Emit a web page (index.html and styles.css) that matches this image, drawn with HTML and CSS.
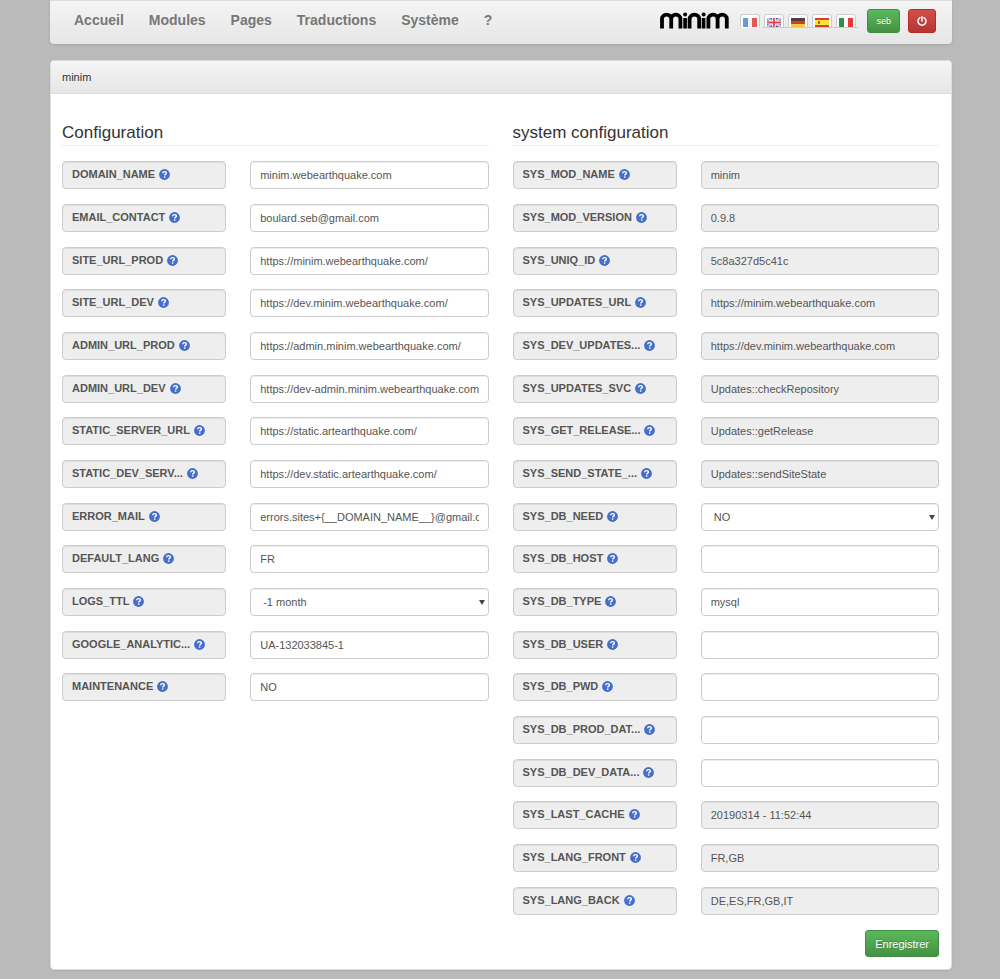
FILE: index.html
```html
<!DOCTYPE html>
<html lang="fr">
<head>
<meta charset="utf-8">
<meta name="viewport" content="width=device-width, initial-scale=1">
<title>minim</title>
<link rel="stylesheet" href="styles.css">
</head>
<body>
<svg class="sprite" aria-hidden="true">
  <symbol id="help" viewBox="0 0 22 22">
    <circle cx="11" cy="11" r="10.8" fill="#446ecb"/>
    <path d="M7.3 8.6C7.5 6.3 9 5.2 11.1 5.2c2.2 0 3.7 1.2 3.7 3 0 2.6-3.5 2.7-3.5 5" fill="none" stroke="#fff" stroke-width="2.8"/>
    <rect x="9.8" y="14.7" width="3" height="2.8" fill="#fff"/>
  </symbol>
</svg>
<div class="container">
  <header class="navbar">
    <nav class="menu">
      <a href="#">Accueil</a>
      <a href="#">Modules</a>
      <a href="#">Pages</a>
      <a href="#">Traductions</a>
      <a href="#">Système</a>
      <a href="#">?</a>
    </nav>
    <div class="tools">
      <a class="logo" href="#" aria-label="minim">
        <svg viewBox="0 0 70 17" fill="none" stroke="#000" stroke-width="3.8">
          <path d="M2 16.5V7a4.6 4.4 0 0 1 9.2 0v9.500M11.200 7a4.600 4.400 0 0 1 9.200 0v9.500"/>
          <path d="M25.100 6V16.500M43.600 6V16.500" stroke-width="3.6"/>
          <circle cx="25.100" cy="2.600" r="2" fill="#000" stroke="none"/>
          <path d="M29.600 16.500V7a4.800 4.400 0 0 1 9.600 0v9.500"/>
          <circle cx="43.600" cy="2.600" r="2" fill="#000" stroke="none"/>
          <path d="M48.400 16.500V7a4.600 4.400 0 0 1 9.200 0v9.500M57.600 7a4.600 4.400 0 0 1 9.200 0v9.500"/>
        </svg>
      </a>
      <div class="langs">
        <a class="lang active" href="#" aria-label="Français"><svg viewBox="0 0 14 9"><path fill="#6c99d6" d="M0 0h5v9H0z"/><path fill="#f3f0f2" d="M5 0h4v9H5z"/><path fill="#e4574f" d="M9 0h5v9H9z"/></svg></a>
        <a class="lang" href="#" aria-label="English"><svg viewBox="0 0 14 9"><path fill="#4165ac" d="M0 0h14v9H0z"/><path stroke="#fff" stroke-width="2" d="M0 0l14 9M14 0L0 9"/><path stroke="#dc6a73" stroke-width=".8" d="M0 0l14 9M14 0L0 9"/><path stroke="#fff" stroke-width="3.6" d="M7 0v9M0 4.5h14"/><path stroke="#df4550" stroke-width="1.8" d="M7 0v9M0 4.5h14"/></svg></a>
        <a class="lang" href="#" aria-label="Deutsch"><svg viewBox="0 0 14 9"><path fill="#4b4343" d="M0 0h14v3H0z"/><path fill="#d83a2e" d="M0 3h14v3H0z"/><path fill="#f2c73c" d="M0 6h14v3H0z"/></svg></a>
        <a class="lang" href="#" aria-label="Español"><svg viewBox="0 0 14 9"><path fill="#e23a31" d="M0 0h14v9H0z"/><path fill="#ffe23a" d="M0 2h14v5H0z"/><path fill="#c95c37" d="M3 3h2v3H3z"/></svg></a>
        <a class="lang" href="#" aria-label="Italiano"><svg viewBox="0 0 14 9"><path fill="#2f9148" d="M0 0h5v9H0z"/><path fill="#fff" d="M5 0h4v9H5z"/><path fill="#e43b37" d="M9 0h5v9H9z"/></svg></a>
      </div>
      <button class="btn green small" type="button">seb</button>
      <button class="btn red small" type="button" aria-label="Déconnexion"><svg viewBox="0 0 10 10" fill="none" stroke="#fff" stroke-width="1.5" stroke-linecap="round"><path d="M3 1.7a4 4 0 1 0 4 0M5 .8V5"/></svg></button>
    </div>
  </header>

  <main class="panel">
    <div class="panel-heading">minim</div>
    <form class="panel-body">
      <div class="columns">
        <section>
          <h2>Configuration</h2>
          <div class="rows">
            <div class="row"><label for="a1">DOMAIN_NAME <svg><use href="#help"/></svg></label><input id="a1" value="minim.webearthquake.com"></div>
            <div class="row"><label for="a2">EMAIL_CONTACT <svg><use href="#help"/></svg></label><input id="a2" value="boulard.seb@gmail.com"></div>
            <div class="row"><label for="a3">SITE_URL_PROD <svg><use href="#help"/></svg></label><input id="a3" value="https://minim.webearthquake.com/"></div>
            <div class="row"><label for="a4">SITE_URL_DEV <svg><use href="#help"/></svg></label><input id="a4" value="https://dev.minim.webearthquake.com/"></div>
            <div class="row"><label for="a5">ADMIN_URL_PROD <svg><use href="#help"/></svg></label><input id="a5" value="https://admin.minim.webearthquake.com/"></div>
            <div class="row"><label for="a6">ADMIN_URL_DEV <svg><use href="#help"/></svg></label><input id="a6" value="https://dev-admin.minim.webearthquake.com/"></div>
            <div class="row"><label for="a7">STATIC_SERVER_URL <svg><use href="#help"/></svg></label><input id="a7" value="https://static.artearthquake.com/"></div>
            <div class="row"><label for="a8">STATIC_DEV_SERV... <svg><use href="#help"/></svg></label><input id="a8" value="https://dev.static.artearthquake.com/"></div>
            <div class="row"><label for="a9">ERROR_MAIL <svg><use href="#help"/></svg></label><input id="a9" value="errors.sites+{__DOMAIN_NAME__}@gmail.com"></div>
            <div class="row"><label for="a10">DEFAULT_LANG <svg><use href="#help"/></svg></label><input id="a10" value="FR"></div>
            <div class="row"><label for="a11">LOGS_TTL <svg><use href="#help"/></svg></label><div class="select"><select id="a11"><option>-1 month</option></select></div></div>
            <div class="row"><label for="a12">GOOGLE_ANALYTIC... <svg><use href="#help"/></svg></label><input id="a12" value="UA-132033845-1"></div>
            <div class="row"><label for="a13">MAINTENANCE <svg><use href="#help"/></svg></label><input id="a13" value="NO"></div>
          </div>
        </section>
        <section>
          <h2>system configuration</h2>
          <div class="rows">
            <div class="row"><label for="b1">SYS_MOD_NAME <svg><use href="#help"/></svg></label><input id="b1" value="minim" readonly></div>
            <div class="row"><label for="b2">SYS_MOD_VERSION <svg><use href="#help"/></svg></label><input id="b2" value="0.9.8" readonly></div>
            <div class="row"><label for="b3">SYS_UNIQ_ID <svg><use href="#help"/></svg></label><input id="b3" value="5c8a327d5c41c" readonly></div>
            <div class="row"><label for="b4">SYS_UPDATES_URL <svg><use href="#help"/></svg></label><input id="b4" value="https://minim.webearthquake.com" readonly></div>
            <div class="row"><label for="b5">SYS_DEV_UPDATES... <svg><use href="#help"/></svg></label><input id="b5" value="https://dev.minim.webearthquake.com" readonly></div>
            <div class="row"><label for="b6">SYS_UPDATES_SVC <svg><use href="#help"/></svg></label><input id="b6" value="Updates::checkRepository" readonly></div>
            <div class="row"><label for="b7">SYS_GET_RELEASE... <svg><use href="#help"/></svg></label><input id="b7" value="Updates::getRelease" readonly></div>
            <div class="row"><label for="b8">SYS_SEND_STATE_... <svg><use href="#help"/></svg></label><input id="b8" value="Updates::sendSiteState" readonly></div>
            <div class="row"><label for="b9">SYS_DB_NEED <svg><use href="#help"/></svg></label><div class="select"><select id="b9"><option>NO</option></select></div></div>
            <div class="row"><label for="b10">SYS_DB_HOST <svg><use href="#help"/></svg></label><input id="b10"></div>
            <div class="row"><label for="b11">SYS_DB_TYPE <svg><use href="#help"/></svg></label><input id="b11" value="mysql"></div>
            <div class="row"><label for="b12">SYS_DB_USER <svg><use href="#help"/></svg></label><input id="b12"></div>
            <div class="row"><label for="b13">SYS_DB_PWD <svg><use href="#help"/></svg></label><input id="b13"></div>
            <div class="row"><label for="b14">SYS_DB_PROD_DAT... <svg><use href="#help"/></svg></label><input id="b14"></div>
            <div class="row"><label for="b15">SYS_DB_DEV_DATA... <svg><use href="#help"/></svg></label><input id="b15"></div>
            <div class="row"><label for="b16">SYS_LAST_CACHE <svg><use href="#help"/></svg></label><input id="b16" value="20190314 - 11:52:44" readonly></div>
            <div class="row"><label for="b17">SYS_LANG_FRONT <svg><use href="#help"/></svg></label><input id="b17" value="FR,GB" readonly></div>
            <div class="row"><label for="b18">SYS_LANG_BACK <svg><use href="#help"/></svg></label><input id="b18" value="DE,ES,FR,GB,IT" readonly></div>
          </div>
        </section>
      </div>
      <div class="actions"><button class="btn green" type="button">Enregistrer</button></div>
    </form>
  </main>
</div>
</body>
</html>
```
FILE: styles.css
```css
* { box-sizing: border-box; }

body {
  margin: 0;
  background: #bababa;
  color: #333;
  font: 11px/16px "Liberation Sans", Arial, sans-serif;
}

.sprite { display: none; }

.container {
  max-width: 902px;
  margin: 0 48px 10px 50px;
}

.navbar {
  display: flex;
  justify-content: space-between;
  height: 44px;
  padding: 0 16px 4px 12px;
  background: linear-gradient(#f4f4f4, #e6e6e6);
  border-top: 1px solid #ddd;
  border-radius: 0 0 4px 4px;
  box-shadow: 0 1px 3px rgba(0, 0, 0, .12);
}

.menu {
  display: flex;
  align-items: center;
  gap: 1px;
  padding-bottom: 2px;
}

.menu a {
  padding: 0 12px;
  color: #777;
  font-size: 14px;
  font-weight: bold;
  text-decoration: none;
}

.tools { display: flex; align-items: center; }
.logo { margin-right: 10px; }
.logo svg { display: block; width: 70px; height: 17px; }

.langs { display: flex; gap: 4px; margin-right: 11px; }

.lang {
  position: relative;
  display: flex;
  align-items: flex-end;
  justify-content: center;
  width: 20px;
  height: 14px;
  background: #fff;
  border: 1px solid #ccc;
  border-radius: 3px 3px 0 0;
}
.lang.active { border-bottom-color: transparent; }
.lang:not(.active)::after {
  content: "";
  position: absolute;
  inset: auto -3px -1px;
  border-bottom: 1px solid #ccc;
}
.lang svg { width: 14px; height: 9px; }

.btn {
  padding: 0 9px;
  height: 27px;
  border: 1px solid;
  border-radius: 3px;
  color: #fff;
  font: inherit;
  text-shadow: 0 -1px 0 rgba(0, 0, 0, .2);
}
.green { background: linear-gradient(#5cb85c, #449144); border-color: #3e8f3e; }
.red { background: linear-gradient(#d3504c, #b93431); border-color: #b52b27; }
.small { height: 24px; padding: 0 8px; font-size: 9px; }
.small + .small { margin-left: 8px; }
.small svg { display: block; width: 10px; height: 10px; }

.panel {
  margin-top: 16px;
  background: #fff;
  border: 1px solid #ddd;
  border-radius: 4px;
  box-shadow: 0 1px 2px rgba(0, 0, 0, .08);
}

.panel-heading {
  padding: 8px 11px;
  background: linear-gradient(#f5f5f5, #e6e6e6);
  border-bottom: 1px solid #ddd;
  border-radius: 4px 4px 0 0;
}

.panel-body { margin: 0; padding: 28px 12px 12px 11px; }

.columns {
  display: grid;
  grid-template-columns: 1fr 1fr;
  gap: 24px;
}

h2 {
  margin: 0 0 15px;
  padding-bottom: 2px;
  border-bottom: 1px solid #eee;
  font-size: 17px;
  line-height: 21px;
  font-weight: normal;
}

.row {
  display: grid;
  grid-template-columns: 164fr 238fr;
  gap: 24px;
  margin-bottom: 15px;
}
.row:nth-child(3n) { margin-bottom: 14px; }

label, input, select {
  width: 100%;
  min-width: 0;
  height: 28px;
  margin: 0;
  padding: 0 9px 1px;
  background: #fff;
  border: 1px solid #ccc;
  border-radius: 4px;
  box-shadow: inset 0 1px 1px rgba(0, 0, 0, .075);
  color: #555;
  font: inherit;
}

label {
  display: flex;
  align-items: center;
  gap: 4px;
  padding-bottom: 2px;
  background: #eee;
  font-weight: bold;
  white-space: nowrap;
}
label svg { width: 11px; height: 11px; flex: none; }

input:read-only { background: #eee; }

.select { position: relative; }
select { padding-left: 12px; appearance: none; }
.select::after {
  content: "";
  position: absolute;
  top: 12px;
  right: 4px;
  border: solid transparent;
  border-width: 5px 3px 0;
  border-top-color: #444;
  pointer-events: none;
}

.actions { display: flex; justify-content: flex-end; padding-top: 1px; }
```
